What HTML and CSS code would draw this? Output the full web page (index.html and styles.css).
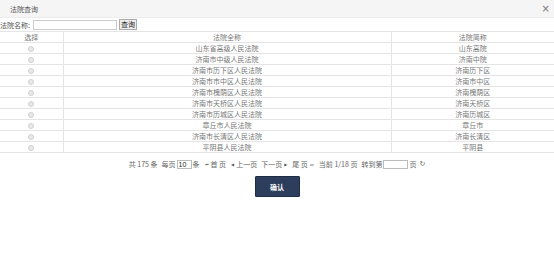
FILE: index.html
```html
<!DOCTYPE html>
<html lang="zh">
<head>
<meta charset="utf-8">
<link rel="stylesheet" href="styles.css">
</head>
<body>
<div class="dialog">
  <div class="titlebar">
    <span class="title">法院查询</span>
    <span class="close">×</span>
  </div>
  <div class="search">
    <label class="search-label">法院名称:</label>
    <input class="search-input" type="text">
    <button class="search-btn">查询</button>
  </div>
  <table class="grid">
    <thead>
      <tr><th class="c-sel">选择</th><th class="c-full">法院全称</th><th class="c-short">法院简称</th></tr>
    </thead>
    <tbody>
      <tr><td><span class="radio"></span></td><td>山东省高级人民法院</td><td>山东高院</td></tr>
      <tr><td><span class="radio"></span></td><td>济南市中级人民法院</td><td>济南中院</td></tr>
      <tr><td><span class="radio"></span></td><td>济南市历下区人民法院</td><td>济南历下区</td></tr>
      <tr><td><span class="radio"></span></td><td>济南市市中区人民法院</td><td>济南市中区</td></tr>
      <tr><td><span class="radio"></span></td><td>济南市槐荫区人民法院</td><td>济南槐荫区</td></tr>
      <tr><td><span class="radio"></span></td><td>济南市天桥区人民法院</td><td>济南天桥区</td></tr>
      <tr><td><span class="radio"></span></td><td>济南市历城区人民法院</td><td>济南历城区</td></tr>
      <tr><td><span class="radio"></span></td><td>章丘市人民法院</td><td>章丘市</td></tr>
      <tr><td><span class="radio"></span></td><td>济南市长清区人民法院</td><td>济南长清区</td></tr>
      <tr><td><span class="radio"></span></td><td>平阴县人民法院</td><td>平阴县</td></tr>
    </tbody>
  </table>
  <div class="pager">
    <span>共 175 条</span>
    <span class="grp">每页<input class="pg-size" type="text" value="10">条</span>
    <span class="grp"><span class="ico">⏮</span>首 页</span>
    <span class="grp"><span class="ico">◀</span>上一页</span>
    <span class="grp">下一页<span class="ico">▶</span></span>
    <span class="grp">尾 页<span class="ico">⏭</span></span>
    <span>当前 1/18 页</span>
    <span class="grp">转到第<input class="pg-goto" type="text">页<span class="refresh">↻</span></span>
  </div>
  <div class="actions">
    <button class="confirm">确认</button>
  </div>
</div>
</body>
</html>
```
FILE: styles.css
```css
* { box-sizing: border-box; }
html, body {
  margin: 0;
  padding: 0;
  background: #fff;
}
body {
  font-family: "Noto Sans CJK SC", "Liberation Sans", sans-serif;
  font-size: 7px;
  color: #666;
}
.dialog {
  width: 554px;
  height: 263px;
  display: flex;
  flex-direction: column;
}
.titlebar {
  height: 18px;
  background: #f5f5f5;
  display: flex;
  align-items: center;
  justify-content: space-between;
  padding: 0 4px 0 10px;
  border-bottom: 1px solid #ececec;
}
.title { color: #555; font-size: 7px; }
.close { color: #777; font-size: 10px; font-family: "DejaVu Sans", sans-serif; }
.search {
  height: 13px;
  display: flex;
  align-items: center;
  gap: 2px;
}
.search-label { color: #555; width: 31px; }
.search-input {
  width: 84px;
  height: 10px;
  border: 1px solid #ccc;
  padding: 0;
  margin: 0;
}
.search-btn {
  height: 11px;
  padding: 0 1px;
  font-family: inherit;
  font-size: 7px;
  border: 1px solid #aaa;
  background: #eee;
  color: #222;
  line-height: 9px;
}
.grid {
  width: 554px;
  border-collapse: collapse;
  table-layout: fixed;
}
.grid th, .grid td {
  height: 11px;
  padding: 0;
  line-height: 10px;
  text-align: center;
  border-top: 1px solid #e4e4e4;
  border-bottom: 1px solid #e4e4e4;
  font-weight: normal;
  color: #777;
}
.grid th + th, .grid td + td { border-left: 1px solid #e4e4e4; }
.grid th { height: 10px; }
.c-sel { width: 63px; }
.c-full { width: 328px; }
.c-short { width: 163px; }
.radio {
  display: inline-block;
  width: 6px;
  height: 6px;
  border-radius: 50%;
  border: 1px solid #d0d0d0;
  background: #e8e8e8;
  vertical-align: middle;
}
.pager {
  margin-top: 5px;
  height: 12px;
  display: flex;
  align-items: center;
  justify-content: center;
  gap: 4px;
  color: #666;
}
.grp { display: inline-flex; align-items: center; gap: 1px; }
.ico { font-size: 4px; color: #555; font-family: "DejaVu Sans", sans-serif; margin: 0 1px; }
.pg-size {
  width: 15px;
  height: 9px;
  border: 1px solid #bbb;
  font-size: 7px;
  padding: 0 1px;
  font-family: "Liberation Sans", sans-serif;
  color: #222;
}
.pg-goto {
  width: 25px;
  height: 9px;
  border: 1px solid #bbb;
  padding: 0;
}
.refresh { font-family: "DejaVu Sans", sans-serif; font-size: 7px; margin-left: 2px; }
.actions {
  margin-top: 6px;
  display: flex;
  justify-content: center;
}
.confirm {
  width: 45px;
  height: 21px;
  background: #2c3e5c;
  color: #fff;
  border: 1px solid #1f2d44;
  font-family: inherit;
  font-weight: bold;
  font-size: 7px;
  border-radius: 1px;
}
```
